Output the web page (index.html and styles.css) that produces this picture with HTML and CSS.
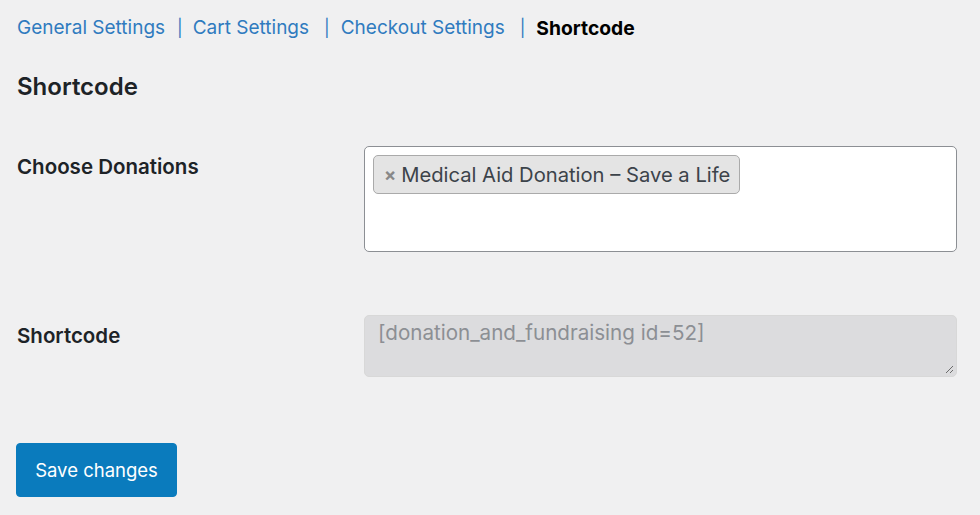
FILE: index.html
```html
<!DOCTYPE html>
<html lang="en">
<head>
<meta charset="utf-8">
<title>Shortcode</title>
<link rel="stylesheet" href="styles.css">
</head>
<body>
<div class="wrap">
  <nav class="subnav">
    <a href="#">General Settings</a><span class="sep">|</span><a href="#">Cart Settings</a><span class="sep sep-wide">|</span><a href="#">Checkout Settings</a><span class="sep sep-wide">|</span><span class="current">Shortcode</span>
  </nav>
  <h2 class="title">Shortcode</h2>
  <form class="form">
    <div class="row row-first">
      <div class="label">Choose Donations</div>
      <div class="field">
        <div class="select">
          <span class="chip"><span class="chip-x">×</span>Medical Aid Donation – Save a Life</span>
        </div>
      </div>
    </div>
    <div class="row row-second">
      <div class="label label-mid">Shortcode</div>
      <div class="field">
        <div class="textarea">[donation_and_fundraising id=52]<svg class="grip" width="10" height="10" viewBox="0 0 10 10"><path d="M9 2 L2 9 M9 6 L6 9" stroke="#6b6b6b" stroke-width="1" fill="none"/></svg></div>
      </div>
    </div>
    <div class="submit">
      <button type="button" class="button">Save changes</button>
    </div>
  </form>
</div>
</body>
</html>
```
FILE: styles.css
```css
html, body {
  margin: 0;
  padding: 0;
  background: #f0f0f1;
}
body {
  font-family: Inter, "Noto Sans", "Liberation Sans", sans-serif;
  color: #1d2327;
  font-size: 18.5px;
}
.wrap {
  padding: 15px 23px 0 17px;
}
.subnav {
  display: flex;
  align-items: center;
  height: 26px;
  font-size: 19px;
  line-height: 26px;
}
.subnav a {
  color: #2f7bbf;
  text-decoration: none;
}
.sep {
  color: #2f7bbf;
  font-size: 17px;
  margin: 0 10px 0 12px;
}
.sep-wide {
  margin: 0 11px 0 15px;
}
.current {
  font-weight: 700;
  color: #000;
  font-size: 19.3px;
}
.title {
  font-size: 24px;
  font-weight: 600;
  margin: 31px 0 0 0;
  line-height: 30px;
  color: #1d2327;
}
.form {
  margin-top: 44px;
}
.row {
  display: grid;
  grid-template-columns: 347px 1fr;
}
.row-first {
  height: 169px;
}
.row-second {
  height: 83px;
}
.label {
  font-weight: 600;
  font-size: 20.5px;
  line-height: 24px;
  padding-top: 9px;
}
.label-mid {
  padding-top: 9px;
}
.select {
  box-sizing: border-box;
  height: 106px;
  background: #fff;
  border: 1px solid #8c8f94;
  border-radius: 5px;
  padding: 8px 8px;
}
.chip {
  display: inline-flex;
  align-items: center;
  box-sizing: border-box;
  height: 39px;
  padding: 0 9px 0 10px;
  background: #e4e4e4;
  border: 1px solid #aaa;
  border-radius: 5px;
  color: #3c434a;
  font-size: 20.2px;
}
.chip-x {
  color: #888;
  font-weight: 700;
  font-size: 18px;
  margin-right: 5px;
}
.textarea {
  position: relative;
  box-sizing: border-box;
  height: 62px;
  background: #dcdcde;
  border: 1px solid #d8d8d8;
  border-radius: 5px;
  padding: 4px 13px;
  color: #8c8f94;
  font-size: 20.6px;
  line-height: 26px;
}
.grip {
  position: absolute;
  right: 2px;
  bottom: 2px;
}
.submit {
  margin-top: 45px;
}
.button {
  box-sizing: border-box;
  width: 161px;
  height: 54px;
  background: #0a7bbd;
  border: 1px solid #0a7bbd;
  border-radius: 4px;
  color: #fff;
  font-family: inherit;
  font-size: 18.5px;
  padding: 0;
  margin-left: -1px;
}
```
